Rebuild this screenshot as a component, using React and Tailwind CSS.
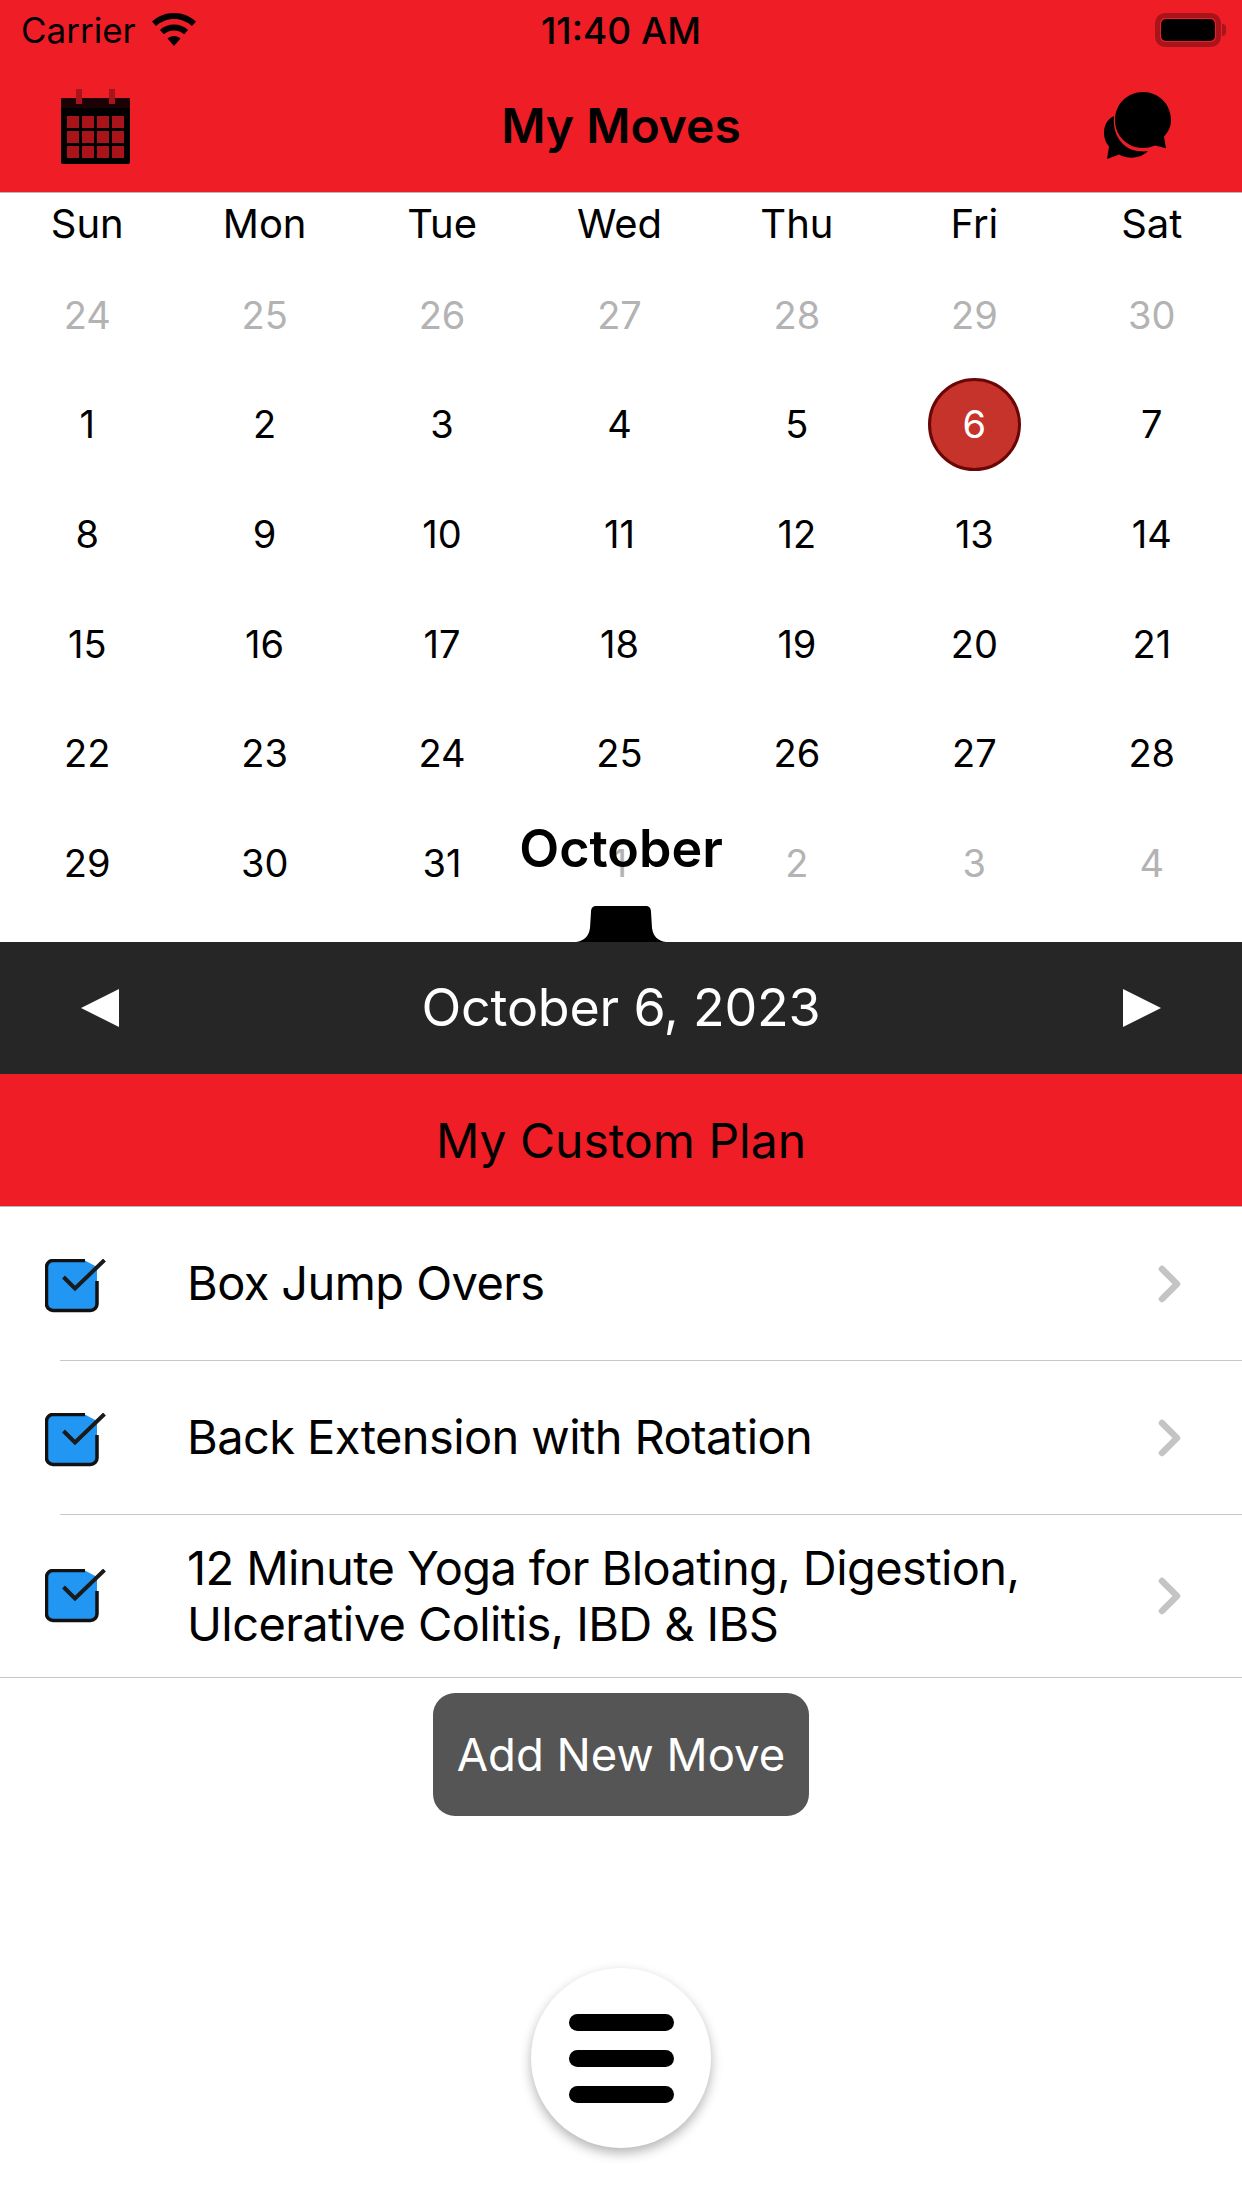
const weeks = [
  [[24,1],[25,1],[26,1],[27,1],[28,1],[29,1],[30,1]],
  [[1],[2],[3],[4],[5],[6,0,1],[7]],
  [[8],[9],[10],[11],[12],[13],[14]],
  [[15],[16],[17],[18],[19],[20],[21]],
  [[22],[23],[24],[25],[26],[27],[28]],
  [[29],[30],[31],[1,1],[2,1],[3,1],[4,1]],
];
const days = ["Sun","Mon","Tue","Wed","Thu","Fri","Sat"];

function Wifi() {
  return (
    <svg width="46" height="34" viewBox="0 0 46 34" className="ml-[15px]">
      <path d="M23 0C14.500 0 6.800 3.200 1 8.600L5 13C9.800 8.700 16.100 6 23 6s13.200 2.700 18 7l4-4.400C39.200 3.200 31.500 0 23 0z" />
      <path d="M23 11.500c-5.400 0-10.300 2-14.100 5.400l4 4.400c2.700-2.400 6.200-3.800 10.100-3.800s7.400 1.400 10.100 3.800l4-4.400C33.300 13.500 28.400 11.500 23 11.500z" />
      <path d="M23 23c-2.500 0-4.700.9-6.500 2.400L23 33l6.500-7.600C27.700 23.900 25.500 23 23 23z" />
    </svg>
  );
}

function CalendarIcon() {
  return (
    <svg width="70" height="76" viewBox="0 0 70 76" className="mt-[4px]">
      <rect x="0" y="9" width="69" height="66" rx="2" fill="#000" />
      <rect x="0" y="9" width="69" height="10" fill="#1c0204" />
      <rect x="15" y="0" width="6" height="15" fill="#a9141b" />
      <rect x="48" y="0" width="6" height="15" fill="#a9141b" />
      {[27, 42, 57].map((y) =>
        [6, 21, 36, 51].map((x) => (
          <rect key={x + "-" + y} x={x} y={y} width="12" height="12" fill="#a9141b" />
        ))
      )}
    </svg>
  );
}

function ChatIcon() {
  return (
    <svg width="68" height="68" viewBox="0 0 68 68" className="mt-[2px]">
      <path d="M10 24C3.500 27 0 33 0 41c0 5 1.700 9.500 5 13.500L3 67l12-4.500 3 1.500c9 3 18 2.500 26-5-2 .3-5 .5-7 .3C20 59 8 44 10 24z" fill="#000" />
      <path d="M39 0C23.500 0 11 12 11 28s12.500 28 28 28c4 0 8-.8 12-2.500l11 2.700-2-11.500C65 39 67 34 67 28 67 12 54.500 0 39 0z" fill="#000" />
    </svg>
  );
}

function Check() {
  return (
    <svg width="62" height="54" viewBox="0 0 62 54" className="shrink-0">
      <path d="M10 1.500H40L52 8V45a6.500 6.500 0 0 1-6.500 6.500H8A6.500 6.500 0 0 1 1.500 45V8A6.500 6.500 0 0 1 8 1.500z" fill="#2196f3" />
      <path d="M40 1.500H8A6.500 6.500 0 0 0 1.500 8V45A6.500 6.500 0 0 0 8 51.500H45.500A6.500 6.500 0 0 0 52 45V22" fill="none" stroke="#111" strokeWidth="3.500" />
      <path d="M18.500 18L30 29.500L59.500 1" fill="none" stroke="#1a1a1a" strokeWidth="4" />
    </svg>
  );
}

function Chevron() {
  return (
    <svg width="24" height="38" viewBox="0 0 24 38" className="shrink-0">
      <path d="M4 4L19 19L4 34" fill="none" stroke="#c4c4c7" strokeWidth="6.500" strokeLinecap="round" strokeLinejoin="round" />
    </svg>
  );
}

function Row({ children, h, border, checkPad, textPad }) {
  return (
    <div className={`flex items-center pl-[45px] pr-[60px] ${h} ${border}`}>
      <div className={`flex w-[142px] shrink-0 ${checkPad}`}><Check /></div>
      <div className={`flex-1 text-[47px] leading-[56px] tracking-[-0.6px] text-black ${textPad}`}>{children}</div>
      <Chevron />
    </div>
  );
}

export default function App() {
  return (
    <div className="relative w-[1242px] h-[2208px] bg-white overflow-hidden text-black" style={{ fontFamily: "Inter, 'Liberation Sans', sans-serif" }}>
      <header className="bg-[#ee1d26] h-[193px] border-b border-[#b8b8b8] flex flex-col">
        <div className="relative h-[60px] flex items-center pl-[21px] pr-[16px] justify-between">
          <div className="flex items-center">
            <span className="text-[35px] leading-none">Carrier</span>
            <Wifi />
          </div>
          <span className="absolute left-0 right-0 text-center text-[37px] leading-none font-medium">11:40 AM</span>
          <div className="flex items-center">
            <div className="w-[66px] h-[34px] rounded-[10px] border-[5px] border-[#a9141b] p-[1px]">
              <div className="w-full h-full bg-black rounded-[5px]" />
            </div>
            <div className="w-[4px] h-[12px] bg-[#a9141b] rounded-r-full ml-[1px]" />
          </div>
        </div>
        <div className="relative flex-1 flex items-center justify-between pl-[61px] pr-[70px] pb-[2px]">
          <CalendarIcon />
          <span className="absolute left-0 right-0 text-center text-[48px] font-semibold leading-none pt-[2px]">My Moves</span>
          <ChatIcon />
        </div>
      </header>

      <section className="relative h-[749px]">
        <div className="-ml-[1.5px] w-[1242px]">
          <div className="grid grid-cols-7 h-[67px] pb-[6px] items-center text-[40px] leading-none">
            {days.map((d) => (
              <div key={d} className="text-center">{d}</div>
            ))}
          </div>
          {weeks.map((w, i) => (
            <div key={i} className="grid grid-cols-7 h-[109.6px] items-center text-[38px] leading-none">
              {w.map(([n, muted, sel], j) => (
                <div key={j} className="flex justify-center">
                  {sel ? (
                    <div className="w-[93px] h-[93px] rounded-full bg-[#c6332b] border-[3px] border-[#6b0606] text-white flex items-center justify-center">{n}</div>
                  ) : (
                    <span className={muted ? "text-[#b3b3b3]" : "text-black"}>{n}</span>
                  )}
                </div>
              ))}
            </div>
          ))}
        </div>
        <div className="absolute left-0 right-0 top-[630px] text-center text-[52px] leading-none font-semibold">October</div>
        <svg width="90" height="36" viewBox="0 0 90 36" className="absolute left-[576px] bottom-0">
          <path d="M0 36C8 35 13 30 14 22L15 6C15 2 17 0 20 0H70C73 0 75 2 75 6L76 22C77 30 82 35 90 36z" fill="#000" />
        </svg>
      </section>

      <div className="h-[132px] bg-[#262626] flex items-center justify-between px-[81px] text-white">
        <svg width="40" height="38" viewBox="0 0 40 38"><path d="M0 19L38 0V38z" fill="#fff" /></svg>
        <span className="text-[52px] leading-none tracking-[-0.2px]">October 6, 2023</span>
        <svg width="40" height="38" viewBox="0 0 40 38"><path d="M40 19L2 0V38z" fill="#fff" /></svg>
      </div>

      <div className="h-[133px] bg-[#ee1d26] flex items-center justify-center text-[48px] leading-none border-b border-[#b8b8b8] pt-[2px]">My Custom Plan</div>

      <Row h="h-[153px]" border="" checkPad="pt-[4px]" textPad="pb-[2px]">Box Jump Overs</Row>
      <div className="h-px ml-[60px] bg-[#c8c8c8]" />
      <Row h="h-[153px]" border="" checkPad="pt-[4px]" textPad="pb-[2px]">Back Extension with Rotation</Row>
      <div className="h-px ml-[60px] bg-[#c8c8c8]" />
      <Row h="h-[163px]" border="border-b border-[#c8c8c8]" checkPad="" textPad="">
        12 Minute Yoga for Bloating, Digestion,<br />Ulcerative Colitis, IBD &amp; IBS
      </Row>

      <div className="flex justify-center pt-[15px]">
        <button className="w-[376px] h-[123px] rounded-[22px] bg-[#555555] text-white text-[45.5px] leading-none">Add New Move</button>
      </div>

      <div className="absolute left-[531px] top-[1968px] w-[180px] h-[180px] rounded-full bg-white shadow-[0_5px_12px_rgba(0,0,0,0.3)] flex flex-col items-center justify-center gap-[19px]">
        <div className="w-[105px] h-[17px] rounded-full bg-black" />
        <div className="w-[105px] h-[17px] rounded-full bg-black" />
        <div className="w-[105px] h-[17px] rounded-full bg-black" />
      </div>
    </div>
  );
}
